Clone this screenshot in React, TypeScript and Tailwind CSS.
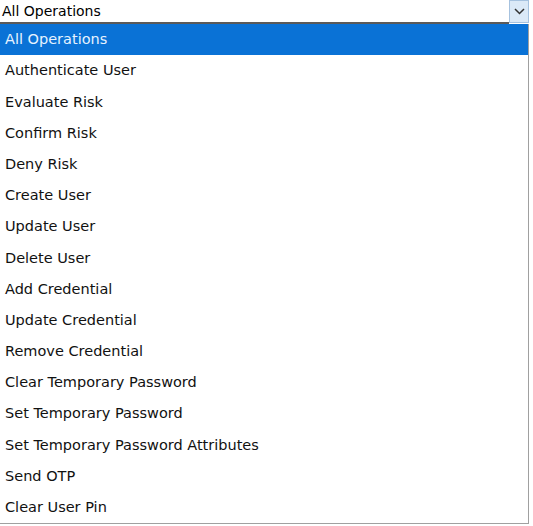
const options = [
  "All Operations",
  "Authenticate User",
  "Evaluate Risk",
  "Confirm Risk",
  "Deny Risk",
  "Create User",
  "Update User",
  "Delete User",
  "Add Credential",
  "Update Credential",
  "Remove Credential",
  "Clear Temporary Password",
  "Set Temporary Password",
  "Set Temporary Password Attributes",
  "Send OTP",
  "Clear User Pin",
];

export default function App() {
  const selected = 0;
  return (
    <div className="w-[533px] h-[526px] bg-white overflow-hidden" style={{ fontFamily: '"DejaVu Sans", Verdana, sans-serif' }}>
      {/* select box */}
      <div className="flex h-[24px] w-[529px]">
        <div className="flex-1 flex items-center pl-[2px] pt-[1px] text-[14px] text-black border-b-2 border-[#5a5a5a]">
          All Operations
        </div>
        <div className="w-[20px] h-[23px] flex items-center justify-center bg-[#dbe9f7] border border-[#a6c2df]">
          <svg width="11" height="7" viewBox="0 0 11 7">
            <path d="M1 1 L5.5 5.5 L10 1" fill="none" stroke="#333" strokeWidth="1.5" />
          </svg>
        </div>
      </div>
      {/* dropdown list */}
      <div className="w-[529px] border-r border-b border-[#a0a0a0]">
        {options.map((o, i) => (
          <div
            key={o}
            className={
              i === selected
                ? "h-[31.2px] flex items-center pl-[5px] pt-[1px] text-[14.5px] bg-[#0a72d6] text-[#e6f2ff]"
                : "h-[31.2px] flex items-center pl-[5px] pt-[1px] text-[14.5px] text-[#111]"
            }
          >
            {o}
          </div>
        ))}
      </div>
    </div>
  );
}
